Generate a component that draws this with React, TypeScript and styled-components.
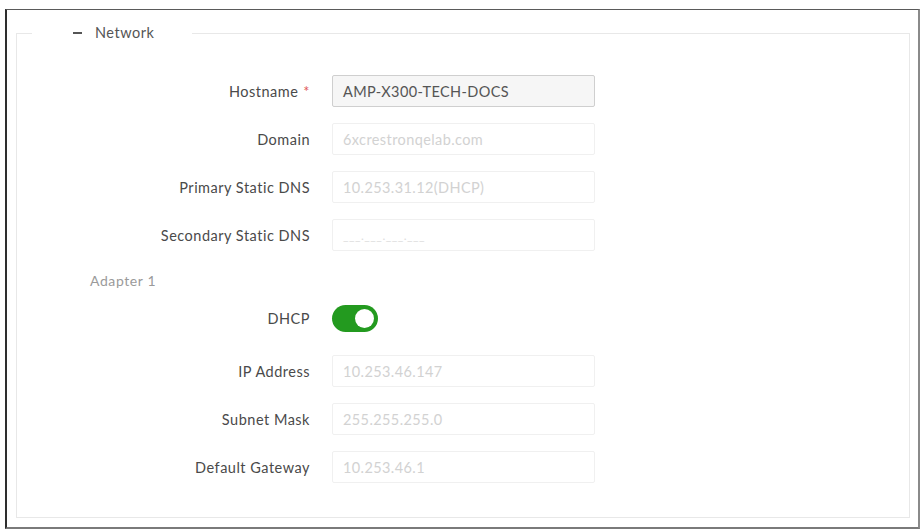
import React from "react";
import styled, { createGlobalStyle } from "styled-components";

const GlobalStyle = createGlobalStyle`
  html, body { margin: 0; padding: 0; background: #ffffff; }
  body { font-family: Lato, "Open Sans", Arial, sans-serif; }
`;

const Page = styled.div`
  width: 923px;
  height: 532px;
  box-sizing: border-box;
  padding: 9px 0 0 5px;
  background: #fff;
`;

const Frame = styled.div`
  width: 915px;
  height: 520px;
  box-sizing: border-box;
  border-left: 2px solid #2e2e2e;
  border-top: 1px solid #5a5a5a;
  border-right: 2px solid #8a8a8a;
  border-bottom: 2px solid #7a7a7a;
  padding: 14px 8px 9px 9px;
  display: flex;
  flex-direction: column;
`;

const Fieldset = styled.fieldset`
  flex: 1;
  margin: 0;
  padding: 0;
  border: 1px solid #e8e8e8;
  min-width: 0;
`;

const Legend = styled.legend`
  margin-left: 15px;
  padding: 0 38px 0 41px;
  display: flex;
  align-items: center;
  font-size: 14.5px;
  letter-spacing: 0.5px;
  line-height: 18px;
  color: #555;
`;

const Dash = styled.span`
  display: inline-block;
  width: 9px;
  height: 2px;
  background: #555;
  margin-right: 13px;
`;

const Body = styled.div`
  display: flex;
  flex-direction: column;
  gap: 16px;
  padding-top: 33px;
`;

const Row = styled.div<{ $after?: number }>`
  display: flex;
  align-items: center;
  gap: 22px;
  margin-bottom: ${(p) => p.$after ?? 0}px;
`;

const Label = styled.label`
  width: 293px;
  text-align: right;
  font-size: 14.5px;
  letter-spacing: 0.5px;
  color: #4a4a4a;
  white-space: nowrap;
`;

const Required = styled.span`
  color: #e05a5a;
  margin-left: 5px;
`;

const Input = styled.div<{ $active?: boolean }>`
  width: 263px;
  height: 32px;
  box-sizing: border-box;
  display: flex;
  align-items: center;
  padding: 0 10px;
  border: 1px solid ${(p) => (p.$active ? "#cfcfcf" : "#f0f0f0")};
  border-radius: 2px;
  background: ${(p) => (p.$active ? "#f6f6f6" : "#ffffff")};
  color: ${(p) => (p.$active ? "#555" : "#d2d2d2")};
  font-size: 14.5px;
  letter-spacing: 0.4px;
  white-space: nowrap;
  overflow: hidden;
`;

const Adapter = styled.div`
  padding-left: 73px;
  margin-top: 6px;
  font-size: 14px;
  line-height: 16px;
  color: #9a9a9a;
  letter-spacing: 0.6px;
`;

const Toggle = styled.div<{ $on?: boolean }>`
  width: 46px;
  height: 27px;
  box-sizing: border-box;
  border-radius: 14px;
  background: ${(p) => (p.$on ? "#239a1f" : "#ccc")};
  display: flex;
  align-items: center;
  justify-content: ${(p) => (p.$on ? "flex-end" : "flex-start")};
  padding: 0 4px;
`;

const Knob = styled.span`
  width: 19px;
  height: 19px;
  border-radius: 50%;
  background: #fff;
`;

const Placeholder = styled.span`
  color: #dcdcdc;
  font-size: 12px;
  letter-spacing: 0.5px;
`;

const fieldsTop = [
  { label: "Domain", value: "6xcrestronqelab.com" },
  { label: "Primary Static DNS", value: "10.253.31.12(DHCP)" },
];

const fieldsBottom = [
  { label: "IP Address", value: "10.253.46.147" },
  { label: "Subnet Mask", value: "255.255.255.0" },
  { label: "Default Gateway", value: "10.253.46.1" },
];

export default function App() {
  return (
    <>
      <GlobalStyle />
      <Page>
        <Frame>
          <Fieldset>
            <Legend>
              <Dash />
              Network
            </Legend>
            <Body>
              <Row>
                <Label>
                  Hostname<Required>*</Required>
                </Label>
                <Input $active>AMP-X300-TECH-DOCS</Input>
              </Row>
              {fieldsTop.map((f) => (
                <Row key={f.label}>
                  <Label>{f.label}</Label>
                  <Input>{f.value}</Input>
                </Row>
              ))}
              <Row>
                <Label>Secondary Static DNS</Label>
                <Input>
                  <Placeholder>___.___.___.___</Placeholder>
                </Input>
              </Row>
              <Adapter>Adapter 1</Adapter>
              <Row $after={7}>
                <Label>DHCP</Label>
                <Toggle $on>
                  <Knob />
                </Toggle>
              </Row>
              {fieldsBottom.map((f) => (
                <Row key={f.label}>
                  <Label>{f.label}</Label>
                  <Input>{f.value}</Input>
                </Row>
              ))}
            </Body>
          </Fieldset>
        </Frame>
      </Page>
    </>
  );
}
